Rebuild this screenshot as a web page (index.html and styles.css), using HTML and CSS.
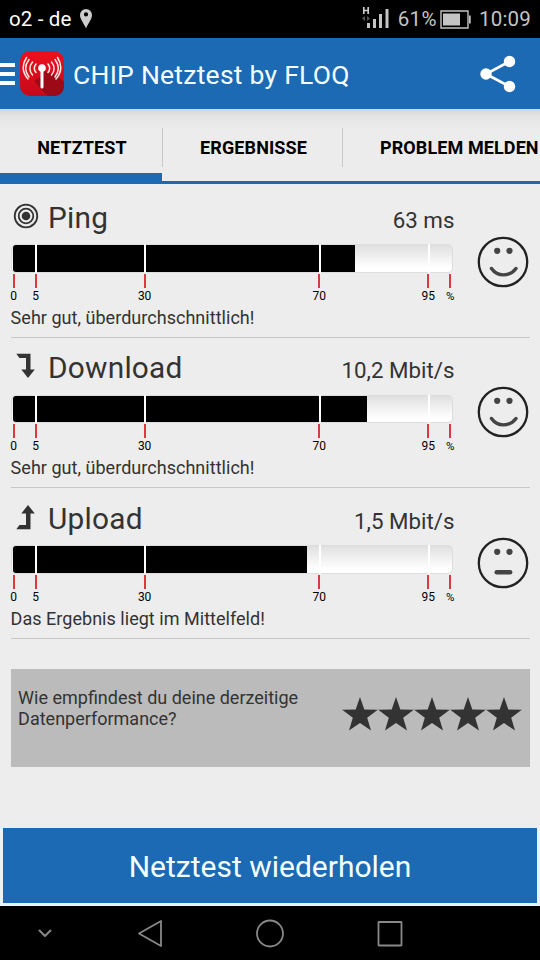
FILE: index.html
```html
<!DOCTYPE html>
<html lang="de">
<head>
<meta charset="utf-8">
<title>CHIP Netztest by FLOQ</title>
<link rel="stylesheet" href="styles.css">
</head>
<body>
<svg width="0" height="0" class="defs">
  <defs>
    <symbol id="star" viewBox="0 0 36 34"><path d="M18 0 22.3 12.6 35.8 12.8 25.2 20.8 29 33.6 18 26.1 7 33.6 10.8 20.8 .2 12.8 13.7 12.6Z"/></symbol>
  </defs>
</svg>
<div class="phone">
  <header class="status">
    <span class="carrier">o2 - de</span>
    <svg class="pin" width="12" height="20" viewBox="0 0 12 20"><path fill="#ccc" fill-rule="evenodd" d="M6 0a6 6 0 0 1 6 6c0 4.500-4.500 9-6 13.500C4.500 15 0 10.500 0 6a6 6 0 0 1 6-6Zm0 3.300a2.100 2.100 0 1 0 0 4.200 2.100 2.100 0 0 0 0-4.200Z"/></svg>
    <span class="grow"></span>
    <svg class="signal" width="28" height="24" viewBox="0 0 28 24"><path fill="none" stroke="#ccc" stroke-width="1.700" d="M1.800 1v7M6.200 1v7M1.800 4.500h4.400"/><path fill="#555" d="m0 12.500 3-2.500v5ZM8 12.500 5 10v5Z"/><path fill="#c4c4c4" d="M5 17h3v5H5zM11 13h3v9h-3zM17 8h3v14h-3zM23.500 3h3v19h-3z"/></svg>
    <span class="percent">61%</span>
    <svg class="battery" width="31" height="19" viewBox="0 0 31 19"><path fill="none" stroke="#c4c4c4" stroke-width="1.400" d="M1 1h27v17H1z"/><path fill="#c4c4c4" d="M3 3.500h17v12H3zM29 5.500h1.700v8H29z"/></svg>
    <span class="clock">10:09</span>
  </header>

  <div class="appbar">
    <svg class="burger" width="15" height="24" viewBox="0 0 15 24"><path fill="#fff" d="M0 1h15v4H0zM0 10h15v4H0zM0 19h15v4H0z"/></svg>
    <svg class="logo" width="44" height="45" viewBox="0 0 44 45">
      <defs><linearGradient id="red" x2="0" y2="1"><stop offset="0" stop-color="#ed101d"/><stop offset="1" stop-color="#c5091a"/></linearGradient></defs>
      <rect width="44" height="45" rx="10" fill="url(#red)"/>
      <path fill="#8b0a17" d="M20 37 14.500 30 20 26 24 20 37 24 44 31v4c0 6-4 10-10 10h-6Z" opacity=".75"/>
      <circle cx="22" cy="17" r="3.800" fill="#fff"/>
      <path fill="none" stroke="#fff" stroke-width="3" stroke-linecap="round" d="M22 19v17"/>
      <g fill="none" stroke="#ffe9e5" stroke-width="1.500" stroke-linecap="round"><path d="M16 13c-2 2.500-2 6 0 8.500M12.500 11c-3.200 4-3.200 9 0 13M9 8.500c-4.200 5.500-4.200 12 0 17.500M6.500 6.500c-4.500 7-4.500 14.500 1.500 21.500M28 13c2 2.500 2 6 0 8.500M31.500 11c3.200 4 3.200 9 0 13M35 8.500c4.200 5.500 4.200 12 0 17.500M37.500 6.500c4.500 7 4.500 14.500-1.500 21.500"/></g>
    </svg>
    <h1>CHIP Netztest by FLOQ</h1>
    <svg class="share" width="36" height="38" viewBox="0 0 36 38"><path fill="none" stroke="#fff" stroke-width="2.700" d="M29.500 6.500 6 19l23.500 12.500"/><g fill="#fff"><circle cx="29.500" cy="6.500" r="5.700"/><circle cx="6" cy="19" r="5.700"/><circle cx="29.500" cy="31.500" r="5.700"/></g></svg>
  </div>

  <nav class="tabs">
    <a class="tab active"><span>NETZTEST</span></a>
    <a class="tab second"><span>ERGEBNISSE</span></a>
    <a class="tab third"><span>PROBLEM MELDEN</span></a>
  </nav>

  <main>
    <section class="metric">
      <div class="head">
        <svg class="icon" width="26" height="26" viewBox="0 0 26 26"><g fill="none" stroke="#333" stroke-width="1.800"><circle cx="13" cy="13" r="11.300"/><circle cx="13" cy="13" r="7.300"/></g><circle cx="13" cy="13" r="4.300" fill="#333"/></svg>
        <h2>Ping</h2><span class="value">63 ms</span>
      </div>
      <div class="bar"><div class="fill" style="width:342px"></div><div class="marks"><i class="none"></i><i></i><i></i><i></i><i></i></div></div>
      <div class="scale"><span>0</span><span>5</span><span>30</span><span>70</span><span>95</span><span class="pc">%</span></div>
      <p>Sehr gut, überdurchschnittlich!</p>
      <svg class="face" width="52" height="52" viewBox="0 0 52 52"><circle cx="26" cy="26" r="24.200" fill="none" stroke="#222" stroke-width="2.300"/><circle cx="20.200" cy="14.800" r="3.100" fill="#444"/><circle cx="32.500" cy="14.800" r="3.100" fill="#444"/><path fill="none" stroke="#444" stroke-width="3.400" stroke-linecap="round" d="M14.500 32.500c6 8.500 18 8.500 24.500 0"/></svg>
    </section>

    <section class="metric">
      <div class="head">
        <svg class="icon" width="26" height="26" viewBox="0 0 26 26"><path fill="#333" d="M3.300 .700H17.500V16.500h4.300L15 25 8.300 16.500H13V5H6.500Z"/></svg>
        <h2>Download</h2><span class="value">10,2 Mbit/s</span>
      </div>
      <div class="bar"><div class="fill" style="width:354.5px"></div><div class="marks"><i class="none"></i><i></i><i></i><i></i><i></i></div></div>
      <div class="scale"><span>0</span><span>5</span><span>30</span><span>70</span><span>95</span><span class="pc">%</span></div>
      <p>Sehr gut, überdurchschnittlich!</p>
      <svg class="face" width="52" height="52" viewBox="0 0 52 52"><circle cx="26" cy="26" r="24.200" fill="none" stroke="#222" stroke-width="2.300"/><circle cx="20.200" cy="14.800" r="3.100" fill="#444"/><circle cx="32.500" cy="14.800" r="3.100" fill="#444"/><path fill="none" stroke="#444" stroke-width="3.400" stroke-linecap="round" d="M14.500 32.500c6 8.500 18 8.500 24.500 0"/></svg>
    </section>

    <section class="metric">
      <div class="head">
        <svg class="icon" width="26" height="26" viewBox="0 0 26 26"><path fill="#333" d="M3.300 25.300H17.500V9.500h4.300L15 1 8.300 9.500H13V21H6.500Z"/></svg>
        <h2>Upload</h2><span class="value">1,5 Mbit/s</span>
      </div>
      <div class="bar"><div class="fill" style="width:294.5px"></div><div class="marks"><i class="none"></i><i></i><i></i><i></i><i></i></div></div>
      <div class="scale"><span>0</span><span>5</span><span>30</span><span>70</span><span>95</span><span class="pc">%</span></div>
      <p>Das Ergebnis liegt im Mittelfeld!</p>
      <svg class="face" width="52" height="52" viewBox="0 0 52 52"><circle cx="26" cy="26" r="24.200" fill="none" stroke="#222" stroke-width="2.300"/><circle cx="20.200" cy="14.800" r="3.100" fill="#444"/><circle cx="32.500" cy="14.800" r="3.100" fill="#444"/><path fill="none" stroke="#444" stroke-width="4.400" stroke-linecap="round" d="M19.700 35.200h13.500"/></svg>
    </section>

    <section class="rating">
      <p>Wie empfindest du deine derzeitige<br>Datenperformance?</p>
      <div class="stars"><svg><use href="#star"/></svg><svg><use href="#star"/></svg><svg><use href="#star"/></svg><svg><use href="#star"/></svg><svg><use href="#star"/></svg></div>
    </section>
  </main>

  <div class="action"><button>Netztest wiederholen</button></div>

  <footer class="navbar">
    <svg width="540" height="54" viewBox="0 0 540 54"><g fill="none" stroke="#888" stroke-width="1.800" stroke-linejoin="round" stroke-linecap="round"><path stroke-width="2" d="m39.500 24.500 5.500 5.500 5.500-5.500"/><path d="M161 15v25L139 27.500Z"/><circle cx="270" cy="27.500" r="13"/><rect x="378.500" y="16" width="23" height="23.500" rx=".5"/></g></svg>
  </footer>
</div>
</body>
</html>
```
FILE: styles.css
```css
* { box-sizing: border-box; margin: 0; padding: 0; }
body { width: 540px; height: 960px; overflow: hidden; background: #ededed; font-family: Roboto, sans-serif; }
.defs { position: absolute; }
.phone { display: flex; flex-direction: column; width: 540px; height: 960px; }
.grow { flex: 1; }
h1, h2 { font-weight: 400; }

.status { display: flex; align-items: center; height: 38px; padding: 0 9px; background: #000; color: #c4c4c4; font-size: 20.500px; white-space: nowrap; }
.carrier { color: #fff; letter-spacing: .15px; }
.pin { margin-left: 8px; }
.signal { margin-right: 8px; margin-top: -2px; }
.percent { letter-spacing: .4px; }
.battery { margin: 0 8px 0 3px; }
.clock { letter-spacing: .2px; }

.appbar { display: flex; align-items: center; height: 71px; padding-right: 24px; background: #1c69b4; color: #f4ffff; }
.logo { margin: 0 9px 0 5px; }
h1 { flex: 1; font-size: 26.500px; letter-spacing: .25px; white-space: nowrap; padding-top: 2px; }

.tabs { display: flex; height: 76px; overflow: hidden; background: linear-gradient(#d6d6d6, #e4e4e4 8px, #ececec 20px); border-bottom: 1px solid #e4eef7; }
.tab { display: flex; align-items: center; justify-content: center; flex: none; width: 180px; padding-top: 4px; border-bottom: 3px solid #1c69b4; font-size: 18px; letter-spacing: .1px; font-weight: 700; color: #000; white-space: nowrap; }
.tab.active { width: 162px; border-bottom-width: 11px; padding: 12px 0 0 2px; }
.tab.second, .tab.third { background: linear-gradient(#c8c8c8, #c8c8c8) 0 19px / 1px 39px no-repeat; }
.tab.second { padding-left: 3px; }
.tab.third { width: 198px; justify-content: flex-start; padding-left: 38px; }

main { flex: 1; padding: 2px 10px 0 10.600px; }
.metric { position: relative; height: 150.500px; border-bottom: 1.500px solid #c8c8c8; color: #333; }
.head { display: flex; align-items: baseline; width: 443.800px; height: 57px; padding-top: 12.500px; }
.icon { align-self: flex-start; margin: 3px 9px 0 2.400px; }
h2 { font-size: 29.800px; letter-spacing: .25px; line-height: 36px; flex: 1; }
.value { font-size: 22.300px; }
.bar { display: flex; position: relative; width: 442px; height: 28.500px; margin-left: .400px; border: 1px solid #ddd; border-radius: 5px; background: linear-gradient(#e0e0e0, #fff 85%); }
.fill { height: 100%; margin-left: 1px; background: #000; border-radius: 3px 0 0 3px; }
.marks { position: absolute; inset: -1px 2px -1px 1.200px; display: grid; grid-template-columns: 5fr 25fr 40fr 25fr 5fr; }
.marks i { width: 1.600px; background: #fff; }
.marks .none { visibility: hidden; }
.scale { display: grid; grid-template-columns: 5fr 25fr 40fr 25fr 5fr 0; width: 436.500px; margin: 1px 0 0 3.100px; font-size: 12px; line-height: 14px; color: #000; }
.scale span { display: flex; flex-direction: column; align-items: center; width: 20px; margin-left: -10px; }
.scale span::before { content: ""; width: 2px; height: 14px; margin-bottom: 1px; background: #dc3a3f; }
.scale .pc { font-size: 11.500px; }
.metric p { font-size: 18px; letter-spacing: .03px; line-height: 22px; margin-top: 4.200px; }
.face { position: absolute; right: 1.200px; top: 48.700px; }

.rating { display: flex; justify-content: space-between; height: 97.500px; margin-top: 30.500px; padding: 18px 8.500px 0 7.500px; background: #bbb; color: #333; }
.rating p { font-size: 18px; line-height: 21px; white-space: nowrap; }
.stars { display: flex; margin-top: 10px; }
.stars svg { width: 36px; height: 34px; fill: #333; }

.action { height: 78.500px; padding: 0 3px 3.500px; background: #e8f3fa; }
button { display: block; width: 534px; height: 75px; border: 0; background: #1c69b4; color: #f4ffff; font: 400 30px Roboto, sans-serif; padding-top: 3px; }
.navbar { height: 54px; background: #000; }
.navbar svg { display: block; }
```
